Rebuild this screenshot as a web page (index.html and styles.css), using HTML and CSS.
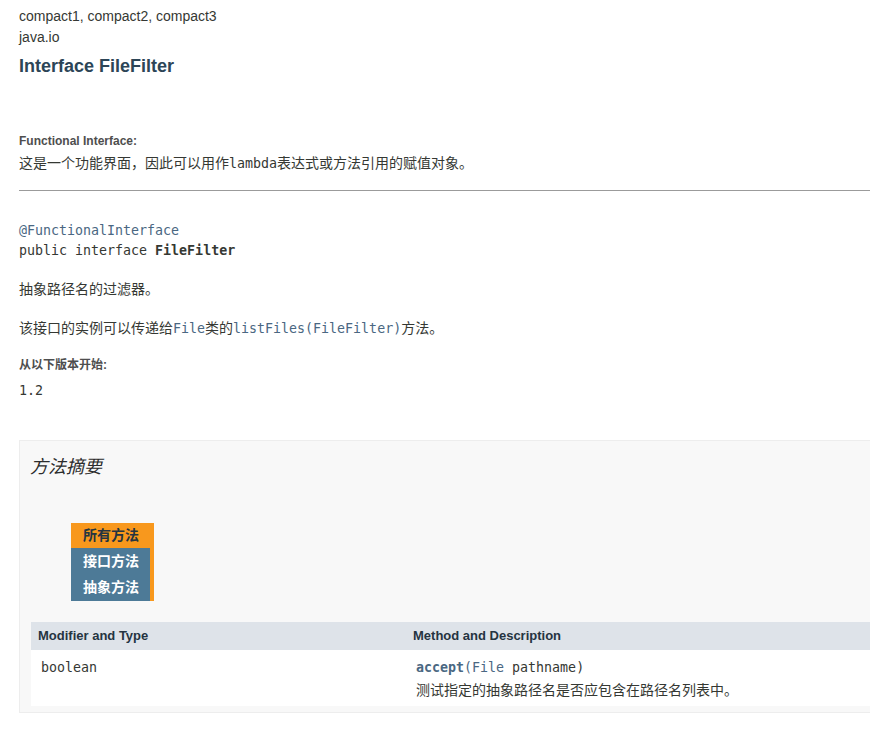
FILE: index.html
```html
<!DOCTYPE html>
<html lang="zh-CN">
<head>
<meta charset="utf-8">
<title>FileFilter</title>
<link rel="stylesheet" href="styles.css">
</head>
<body>
<div class="header">
  <div class="subTitle first">compact1, compact2, compact3</div>
  <div class="subTitle">java.io</div>
  <h2 class="title">Interface FileFilter</h2>
</div>

<div class="contentContainer">
  <dl class="fiDl">
    <dt>Functional Interface:</dt>
    <dd>这是一个功能界面，因此可以用作<code>lambda</code>表达式或方法引用的赋值对象。</dd>
  </dl>
  <hr>
  <pre class="decl"><span class="anno">@FunctionalInterface</span>
public interface <b>FileFilter</b></pre>
  <p class="block first">抽象路径名的过滤器。</p>
  <p class="block">该接口的实例可以传递给<code class="link">File</code>类的<code class="link">listFiles(FileFilter)</code>方法。</p>
  <dl class="since">
    <dt>从以下版本开始:</dt>
    <dd><code>1.2</code></dd>
  </dl>

  <div class="summary">
    <h3 class="sumTitle">方法摘要</h3>
    <div class="tabs">
      <span class="tab active">所有方法</span>
      <span class="tab">接口方法</span>
      <span class="tab">抽象方法</span>
    </div>
    <table class="memberSummary">
      <tr>
        <th class="colFirst">Modifier and Type</th>
        <th class="colLast">Method and Description</th>
      </tr>
      <tr>
        <td class="colFirst"><code>boolean</code></td>
        <td class="colLast"><code><b class="link">accept</b><span class="link">(File</span> pathname)</code>
          <div class="desc">测试指定的抽象路径名是否应包含在路径名列表中。</div></td>
      </tr>
    </table>
  </div>
</div>
</body>
</html>
```

FILE: styles.css
```css
html, body { overflow-x: hidden; }
body {
  margin: 0;
  font-family: "Liberation Sans", Arial, "Noto Sans CJK SC", sans-serif;
  font-size: 14px;
  color: #353833;
  background: #fff;
}
code, pre {
  font-family: "DejaVu Sans Mono", "Noto Sans CJK SC", monospace;
  font-size: 13.3px;
}
.header { padding: 0 19px; }
.subTitle { line-height: 20px; margin-top: 1px; }
.subTitle.first { margin-top: 6px; }
.title {
  margin: 7px 0 0;
  font-size: 18px;
  line-height: 24px;
  color: #2c4557;
}

.contentContainer { padding: 55px 0 0 19px; }

dl { margin: 0; }
dt {
  font-size: 12px;
  font-weight: bold;
  line-height: 16px;
  color: #4e4e4e;
}
dd { margin: 4px 0 0; line-height: 20px; }

hr {
  margin: 16px 0 0;
  border: 0;
  border-top: 1px solid #9b9b9b;
  height: 0;
}

.decl {
  margin: 30px 0 0;
  line-height: 20px;
  color: #353833;
}
.anno { color: #4a6782; }
.block { margin: 19px 0 0; line-height: 20px; }
.block.first { margin-top: 18px; }
.link { color: #4a6782; }
.since { margin-top: 18px; }
.since dd { margin-top: 7px; }

.summary {
  margin: 39px -20px 0 0;
  background: #f8f8f8;
  border: 1px solid #ededed;
  padding: 14px 0 6px 11px;
}
.sumTitle {
  margin: 0;
  font-size: 18px;
  line-height: 24px;
  font-style: italic;
  font-weight: normal;
  color: #2c2c2c;
  margin-left: -1px;
}
.tabs {
  display: flex;
  flex-direction: column;
  align-items: flex-start;
  margin: 44px 0 21px 40px;
}
.tab {
  width: 67px;
  height: 26px;
  line-height: 26px;
  padding-left: 12px;
  font-size: 14px;
  font-weight: bold;
  color: #fff;
  background: #4d7a97;
  border-right: 4px solid #f8981d;
}
.tab:last-child { height: 27px; line-height: 27px; }
.tab.active {
  width: 71px;
  height: 25px;
  line-height: 25px;
  background: #f8981d;
  color: #253441;
  border-right: 0;
}

.memberSummary {
  width: 100%;
  border-collapse: collapse;
}
.memberSummary th {
  background: #dee3e9;
  text-align: left;
  font-size: 13px;
  color: #253441;
  height: 28px;
  line-height: 28px;
  padding: 0 3px 0 7px;
}
.memberSummary td {
  background: #fff;
  vertical-align: top;
  padding: 8px 3px 6px 10px;
  line-height: 18px;
}
.colFirst { width: 362px; }
.desc { margin-top: 3px; line-height: 20px; }
```
